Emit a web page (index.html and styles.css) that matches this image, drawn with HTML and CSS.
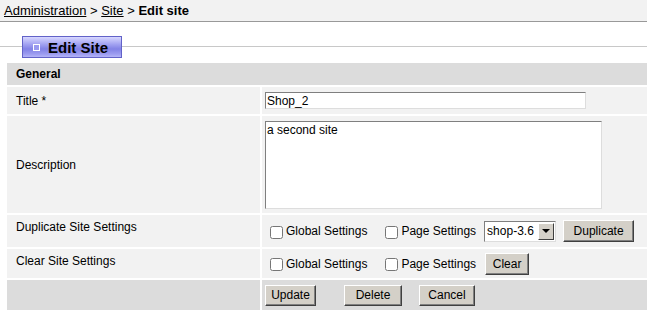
FILE: index.html
```html
<!DOCTYPE html>
<html lang="en">
<head>
  <meta charset="UTF-8" />
  <title>Edit site - Administration</title>
  <link rel="stylesheet" href="styles.css">
</head>
<body>
  <div class="breadcrumb">
    <a href="#">Administration</a> &gt; <a href="#">Site</a> &gt; <strong>Edit site</strong>
  </div>

  <div class="tabbar">
    <div class="tab"><span class="tab-icon"></span>Edit Site</div>
  </div>

  <form class="site-form">
    <table class="form-table">
      <tr class="section">
        <td colspan="2">General</td>
      </tr>
      <tr class="row-title">
        <td class="label">Title *</td>
        <td><input type="text" class="text-input" value="Shop_2" /></td>
      </tr>
      <tr class="row-desc">
        <td class="label">Description</td>
        <td><textarea class="text-area">a second site</textarea></td>
      </tr>
      <tr class="row-dup">
        <td class="label top">Duplicate Site Settings</td>
        <td>
          <div class="opts">
            <label class="opt"><input type="checkbox" /> Global Settings</label>
            <label class="opt focus"><input type="checkbox" /> Page Settings</label>
            <div class="pick">
              <select>
                <option>shop-3.6</option>
              </select>
              <span class="pick-arrow"></span>
            </div>
            <button type="button" class="btn btn-dup">Duplicate</button>
          </div>
        </td>
      </tr>
      <tr class="row-clear">
        <td class="label top">Clear Site Settings</td>
        <td>
          <div class="opts">
            <label class="opt"><input type="checkbox" /> Global Settings</label>
            <label class="opt"><input type="checkbox" /> Page Settings</label>
            <button type="button" class="btn btn-clear">Clear</button>
          </div>
        </td>
      </tr>
      <tr class="actions">
        <td></td>
        <td>
          <div class="action-btns">
            <button type="button" class="btn btn-update">Update</button>
            <button type="button" class="btn btn-delete">Delete</button>
            <button type="button" class="btn btn-cancel">Cancel</button>
          </div>
        </td>
      </tr>
    </table>
  </form>
</body>
</html>
```

FILE: styles.css
```css
body {
  margin: 0;
  padding: 0;
  font-family: "Liberation Sans", Arial, sans-serif;
  font-size: 12px;
  color: #000;
  background: #fff;
}

.breadcrumb {
  height: 21px;
  line-height: 21px;
  padding-left: 4px;
  background: #f2f2f2;
  border-bottom: 1px solid #999;
  font-size: 13px;
}

.breadcrumb a {
  color: #000;
  text-decoration: underline;
}

.tabbar {
  position: relative;
  height: 41px;
}

.tabbar::before {
  content: "";
  position: absolute;
  left: 0;
  right: 0;
  top: 24px;
  border-top: 1px solid #c8c8c8;
}

.tab {
  position: absolute;
  left: 22px;
  top: 14px;
  width: 98px;
  height: 20px;
  border: 1px solid #6262c8;
  background: linear-gradient(#d8d8ff, #a4a4f2 35%, #8282e6 60%, #9c9cf0 85%, #b4b4f8);
  font-weight: bold;
  font-size: 15px;
  display: flex;
  align-items: center;
}

.tab-icon {
  width: 5px;
  height: 5px;
  border: 1px solid #fff;
  background: #9a9af0;
  margin: 1px 8px 0 10px;
}

.form-table {
  margin-left: 7px;
  width: 640px;
  border-collapse: separate;
  border-spacing: 0;
}

.form-table td {
  background: #f2f2f2;
  border-bottom: 2px solid #fff;
  padding: 0;
  vertical-align: middle;
}

.form-table td + td {
  border-left: 2px solid #fff;
  padding-left: 3px;
}

.form-table .label {
  width: 244px;
  padding-left: 9px;
}

.form-table .label.top {
  vertical-align: top;
  padding-top: 5px;
}

.section td {
  background: #dcdcdc;
  font-weight: bold;
  height: 22px;
  padding-left: 9px;
}

.row-title td {
  height: 27px;
}

.row-desc td {
  height: 97px;
}

.row-dup td {
  height: 32px;
}

.row-dup td.top {
  height: 27px;
}

.row-clear td {
  height: 29px;
}

.row-clear td.top {
  height: 24px;
}

.actions td {
  background: #dcdcdc;
  height: 30px;
  border-bottom: none;
}

.text-input {
  width: 321px;
  height: 17px;
  box-sizing: border-box;
  border: 1px solid #7f7f7f;
  border-right-color: #ddd;
  border-bottom-color: #ddd;
  font-family: inherit;
  font-size: 12px;
  padding: 0 1px;
  margin: 0;
  display: block;
}

.text-area {
  width: 337px;
  height: 88px;
  box-sizing: border-box;
  border: 1px solid #7f7f7f;
  border-right-color: #ddd;
  border-bottom-color: #ddd;
  font-family: inherit;
  font-size: 12px;
  padding: 1px;
  margin: 0;
  resize: none;
  display: block;
}

.opts {
  display: flex;
  align-items: center;
}

.opt {
  display: flex;
  align-items: center;
  gap: 3px;
  margin-left: 5px;
  margin-right: 18px;
}

.opt + .opt {
  margin-left: 0;
  margin-right: 8px;
}

.opt input {
  margin: 2px 0 0;
  width: 13px;
  height: 13px;
}

.pick {
  display: flex;
  align-items: stretch;
  width: 72px;
  height: 21px;
  box-sizing: border-box;
  border: 1px solid #7f7f7f;
  border-right-color: #ddd;
  border-bottom-color: #ddd;
  background: #fff;
  margin-right: 7px;
}

.pick select {
  appearance: none;
  -webkit-appearance: none;
  border: none;
  background: transparent;
  font-family: inherit;
  font-size: 12px;
  padding: 0 2px;
  flex: 1;
  min-width: 0;
  outline: none;
}

.pick-arrow {
  width: 16px;
  margin: 1px;
  box-sizing: border-box;
  background: #d4d0c8;
  border: 1px solid;
  border-color: #fff #404040 #404040 #fff;
  display: flex;
  align-items: center;
  justify-content: center;
}

.pick-arrow::after {
  content: "";
  border-left: 4px solid transparent;
  border-right: 4px solid transparent;
  border-top: 4px solid #000;
}

.btn {
  font-family: inherit;
  font-size: 12px;
  background: #d4d0c8;
  border: 1px solid;
  border-color: #fff #404040 #404040 #fff;
  box-shadow: inset -1px -1px 0 #808080;
  padding: 0;
  height: 22px;
  color: #000;
}

.btn-dup {
  width: 71px;
}

.btn-clear {
  width: 44px;
  margin-left: 1px;
}

.action-btns {
  display: flex;
  align-items: center;
}

.btn-update {
  width: 51px;
  height: 21px;
  margin-right: 28px;
}

.btn-delete {
  width: 58px;
  height: 21px;
  margin-right: 17px;
}

.btn-cancel {
  width: 56px;
  height: 21px;
}
```
